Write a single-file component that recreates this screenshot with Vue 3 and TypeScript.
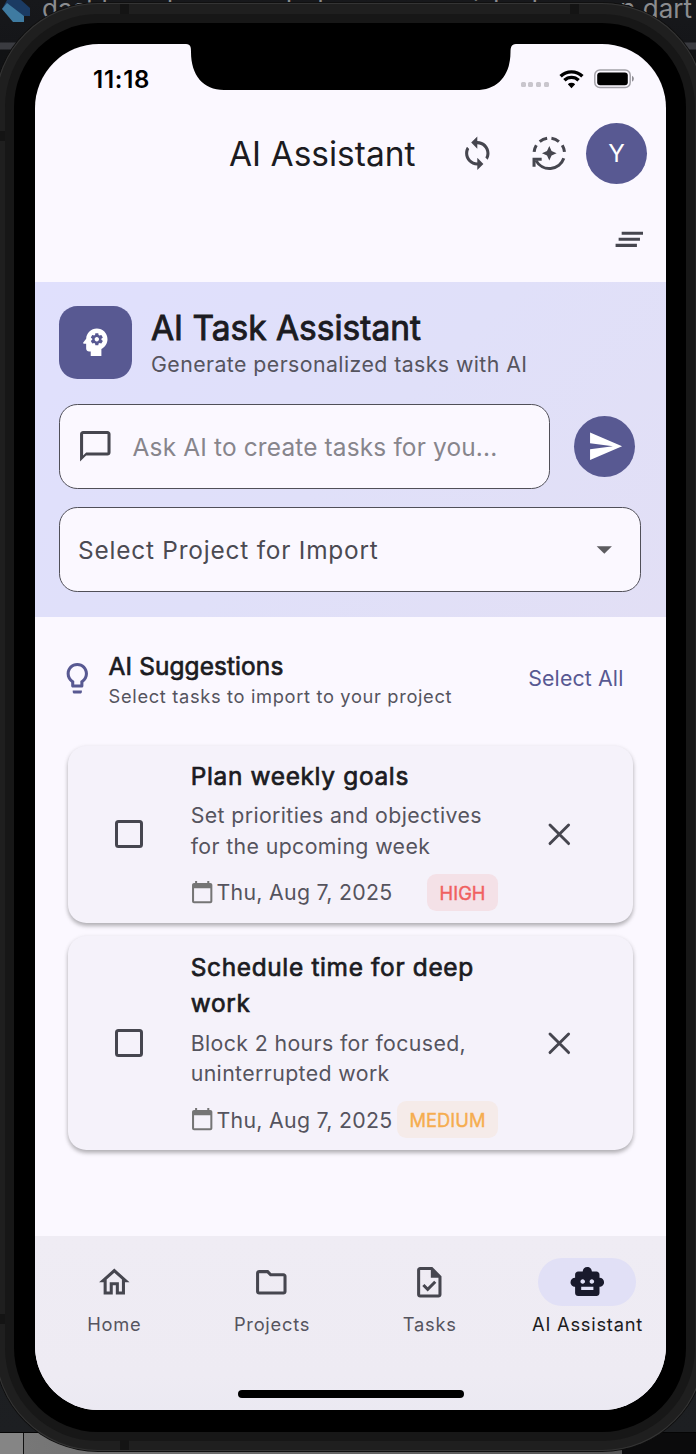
<script setup lang="ts">
interface Task {
  title: string
  description: string
  date: string
  priority: 'HIGH' | 'MEDIUM'
}

interface NavItem {
  label: string
  icon: string
  active?: boolean
}

const tasks: Task[] = [
  {
    title: 'Plan weekly goals',
    description: 'Set priorities and objectives for the upcoming week',
    date: 'Thu, Aug 7, 2025',
    priority: 'HIGH',
  },
  {
    title: 'Schedule time for deep work',
    description: 'Block 2 hours for focused, uninterrupted work',
    date: 'Thu, Aug 7, 2025',
    priority: 'MEDIUM',
  },
]

const navItems: NavItem[] = [
  { label: 'Home', icon: 'M12 5.69l5 4.5V18h-2v-6H9v6H7v-7.81l5-4.5M12 3L2 12h3v8h6v-6h2v6h6v-8h3L12 3z' },
  {
    label: 'Projects',
    icon: 'M9.17 6l2 2H20v10H4V6h5.17M10 4H4c-1.1 0-1.99.9-1.99 2L2 18c0 1.1.9 2 2 2h16c1.1 0 2-.9 2-2V8c0-1.1-.9-2-2-2h-8l-2-2z',
  },
  {
    label: 'Tasks',
    icon: 'M14 2H6c-1.1 0-2 .9-2 2v16c0 1.1.89 2 1.99 2H18c1.1 0 2-.9 2-2V8l-6-6zm4 18H6V4h7v5h5v11zM8.82 13.05L7.4 14.46 10.94 18l5.66-5.66-1.41-1.41-4.24 4.24-2.13-2.12z',
  },
  {
    label: 'AI Assistant',
    icon: 'M20 9V7c0-1.1-.9-2-2-2h-3c0-1.66-1.34-3-3-3S9 3.34 9 5H6c-1.1 0-2 .9-2 2v2c-1.66 0-3 1.34-3 3s1.34 3 3 3v4c0 1.1.9 2 2 2h12c1.1 0 2-.9 2-2v-4c1.66 0 3-1.34 3-3s-1.34-3-3-3zM7.5 11.5c0-.83.67-1.5 1.5-1.5s1.5.67 1.5 1.5S9.83 13 9 13s-1.5-.67-1.5-1.5zM16 17H8v-2h8v2zm-1-4c-.83 0-1.5-.67-1.5-1.5S14.17 10 15 10s1.5.67 1.5 1.5S15.83 13 15 13z',
    active: true,
  },
]
</script>

<template>
  <div class="desktop">
    <div class="editor-tabs">
      <svg class="dart" viewBox="0 0 30 22">
        <path d="M2 9L7 0h14l9 8v8h-6z" fill="#1b3b63" />
        <path d="M2 9l5-6 17 13v6H13z" fill="#3f7ba1" />
      </svg>
      <span class="tab-first">dashboard_screen.dart</span>
      <span class="tab-last">assistant_screen.dart</span>
    </div>
    <div class="desk-left"></div>
    <div class="desk-right"></div>

    <div class="phone">
      <i class="seam seam-tl"></i><i class="seam seam-tr"></i><i class="seam seam-bl"></i>
      <i class="seam side-tl"></i><i class="seam side-bl"></i>
      <div class="band">
        <div class="bezel">
          <div class="screen">
            <svg class="notch" width="330" height="46" viewBox="0 0 330 46">
              <path d="M0 0H330C325 0 324.500 4 324.500 8C324.500 31 312 46 290 46H38C17 46 5 31 5 8C5 4 5 0 0 0Z" />
            </svg>

            <div class="status">
              <span class="time">11:18</span>
              <span class="signal"><b></b><b></b><b></b><b></b></span>
              <svg class="wifi" width="25" height="19" viewBox="0 0 25 19">
                <path d="M1.6 6.3a15.6 15.6 0 0 1 21.8 0" />
                <path d="M5.4 10.3a10.2 10.2 0 0 1 14.2 0" />
                <path d="M12.5 18.2l-3.7-3.9a5.4 5.4 0 0 1 7.4 0z" class="dot" />
              </svg>
              <svg class="battery" width="41" height="20" viewBox="0 0 41 20">
                <rect x=".8" y="1" width="35.4" height="17.5" rx="5" fill="none" stroke="#a3a1a8" stroke-width="1.5" />
                <rect x="3.2" y="3.4" width="30.6" height="12.8" rx="3" fill="#000" />
                <path d="M38 6.8q1.9 1 1.9 3t-1.9 3z" fill="#8f8d94" />
              </svg>
            </div>

            <header class="app-bar">
              <h1>AI Assistant</h1>
              <svg class="icon bar-sync" viewBox="0 0 24 24">
                <path d="M12 4V1L8 5l4 4V6c3.31 0 6 2.69 6 6 0 1.01-.25 1.97-.7 2.8l1.46 1.46C19.54 15.03 20 13.57 20 12c0-4.42-3.58-8-8-8zm0 14c-3.31 0-6-2.69-6-6 0-1.01.25-1.97.7-2.8L5.24 7.74C4.46 8.97 4 10.43 4 12c0 4.42 3.58 8 8 8v3l4-4-4-4v3z" />
              </svg>
              <svg class="icon bar-spark" viewBox="0 0 24 24">
                <path d="M12 7.2l1.5 3.3 3.3 1.5-3.3 1.500-1.500 3.300-1.500-3.300L7.200 12l3.300-1.500z" />
                <g class="arc">
                  <path d="M2.050 11.100a10 10 0 0 1 1.450-4.400" />
                  <path d="M5.700 4.300a10 10 0 0 1 4.900-2.200" />
                  <path d="M13.400 2.100a10 10 0 0 1 4.900 2.200" />
                  <path d="M20.500 6.700a10 10 0 0 1 1.450 4.400" />
                  <path d="M21.500 15.200a10 10 0 0 1-18.200 1.600" />
                  <path d="M2 20.900v-5h5" />
                </g>
              </svg>
              <div class="avatar">Y</div>
            </header>
            <div class="sub-bar">
              <svg class="icon" viewBox="0 0 24 24"><path d="M5 13h14v-2H5v2zm-2 4h14v-2H3v2zM7 7v2h14V7H7z" /></svg>
            </div>

            <section class="panel">
              <div class="panel-head">
                <div class="badge-icon">
                  <svg class="icon" viewBox="0 0 24 24">
                    <path d="M13 8.57c-.79 0-1.43.64-1.43 1.43s.64 1.43 1.43 1.43 1.43-.64 1.43-1.43S13.79 8.57 13 8.57zM13 3C9.25 3 6.2 5.94 6.02 9.64L4.1 12.2c-.25.33-.01.8.4.8H6v3c0 1.1.9 2 2 2h1v3h7v-4.68c2.36-1.12 4-3.53 4-6.32C20 6.13 16.87 3 13 3zM16 10c0 .13-.01.26-.02.39l.83.66c.08.06.1.16.05.25l-.8 1.39c-.05.09-.16.12-.24.09l-.99-.4c-.21.16-.43.29-.67.39L14 13.83c-.01.1-.1.17-.2.17h-1.6c-.1 0-.18-.07-.2-.17l-.15-1.06c-.25-.1-.47-.23-.68-.39l-.99.4c-.09.03-.2 0-.25-.09l-.8-1.39c-.05-.08-.03-.19.05-.25l.84-.66C10.01 10.26 10 10.13 10 10c0-.13.02-.27.04-.39l-.85-.66c-.08-.06-.1-.16-.05-.26l.8-1.38c.05-.09.15-.12.24-.09l1 .4c.2-.15.43-.29.67-.39L12 6.17c.02-.1.1-.17.2-.17h1.6c.1 0 .18.07.2.17l.15 1.06c.24.1.46.23.67.39l1-.4c.09-.03.2 0 .24.09l.8 1.38c.05.09.03.2-.05.26l-.85.66c.03.12.04.25.04.39z" />
                  </svg>
                </div>
                <div class="panel-title">
                  <h2>AI Task Assistant</h2>
                  <p>Generate personalized tasks with AI</p>
                </div>
              </div>
              <div class="prompt-row">
                <div class="field prompt">
                  <svg class="icon" viewBox="0 0 24 24">
                    <path d="M20 2H4c-1.1 0-2 .9-2 2v18l4-4h14c1.1 0 2-.9 2-2V4c0-1.1-.9-2-2-2zm0 14H6l-2 2V4h16v12z" />
                  </svg>
                  <span>Ask AI to create tasks for you...</span>
                </div>
                <button class="send" aria-label="Send">
                  <svg class="icon" viewBox="0 0 24 24"><path d="M2.01 21L23 12 2.01 3 2 10l15 2-15 2z" /></svg>
                </button>
              </div>
              <div class="field select">
                <span>Select Project for Import</span>
                <svg class="icon" viewBox="0 0 24 24"><path d="M7 10l5 5 5-5z" /></svg>
              </div>
            </section>

            <section class="suggest-head">
              <svg class="icon bulb" viewBox="0 0 24 24">
                <path d="M9 21c0 .5.4 1 1 1h4c.6 0 1-.5 1-1v-1H9v1zm3-19C8.1 2 5 5.1 5 9c0 2.4 1.2 4.5 3 5.7V17c0 .5.4 1 1 1h6c.6 0 1-.5 1-1v-2.300c1.800-1.300 3-3.400 3-5.700 0-3.900-3.100-7-7-7zm2.900 11.100l-.9.6V16h-4v-2.300l-.9-.6C7.800 12.200 7 10.600 7 9c0-2.800 2.200-5 5-5s5 2.200 5 5c0 1.600-.8 3.200-2.100 4.100z" />
              </svg>
              <div class="suggest-text">
                <h3>AI Suggestions</h3>
                <p>Select tasks to import to your project</p>
              </div>
              <span class="select-all">Select All</span>
            </section>

            <main class="cards">
              <article v-for="task in tasks" :key="task.title" class="card">
                <div class="cell"><span class="checkbox"></span></div>
                <div class="body">
                  <h4>{{ task.title }}</h4>
                  <p>{{ task.description }}</p>
                  <div class="meta">
                    <svg class="cal" viewBox="0 0 24 24">
                      <path d="M20 3h-1V1h-2v2H7V1H5v2H4c-1.1 0-2 .9-2 2v16c0 1.1.9 2 2 2h16c1.1 0 2-.9 2-2V5c0-1.1-.9-2-2-2zm0 18H4V8h16v13z" />
                    </svg>
                    <span class="date">{{ task.date }}</span>
                    <span class="priority" :class="task.priority.toLowerCase()">{{ task.priority }}</span>
                  </div>
                </div>
                <div class="cell">
                  <svg class="icon" viewBox="0 0 24 24">
                    <path d="M5.900 5.900l12.200 12.200M18.100 5.900L5.900 18.100" class="cross" />
                  </svg>
                </div>
              </article>
            </main>

            <nav class="nav">
              <div v-for="item in navItems" :key="item.label" class="nav-item" :class="{ active: item.active }">
                <div class="pill"><svg class="icon" viewBox="0 0 24 24"><path :d="item.icon" /></svg></div>
                <span>{{ item.label }}</span>
              </div>
              <div class="home-bar"></div>
            </nav>
          </div>
        </div>
      </div>
    </div>
  </div>
</template>

<style>
body {
  margin: 0;
  background: #151619;
}
</style>

<style scoped>
* {
  box-sizing: border-box;
}
h1, h2, h3, h4, p {
  margin: 0;
  font-weight: 400;
}
.desktop {
  position: relative;
  width: 696px;
  height: 1454px;
  overflow: hidden;
  background: linear-gradient(#17181b 0, #151619 42px, #3a3b40 43px, #3a3b40 49px, #111214 50px, #1d1f22 1432px);
  font-family: Inter, "Liberation Sans", sans-serif;
  color: #1b1b21;
}
.editor-tabs {
  position: absolute;
  inset: 0 0 auto 0;
  height: 22px;
  color: #8b8c8f;
  font-size: 26px;
  line-height: 18px;
  white-space: nowrap;
}
.dart {
  position: absolute;
  left: 0;
  top: 0;
  width: 30px;
  height: 22px;
}
.tab-first {
  position: absolute;
  left: 42px;
  top: 0;
}
.tab-last {
  position: absolute;
  right: 4px;
  top: 0;
}
.desk-left,
.desk-right {
  position: absolute;
  bottom: 0;
  height: 22px;
  border-top: 1px solid #050505;
}
.desk-left {
  left: 0;
  width: 622px;
  background: linear-gradient(90deg, #858585 0, #858585 23px, #111 23px, #111 24px, #777 24px, #555 100%);
}
.desk-right {
  left: 622px;
  right: 0;
  background: #0b0b0c;
}

/* Device shell: outer rim, inner band, black bezel */
.phone {
  position: absolute;
  left: -5px;
  top: 3px;
  width: 710px;
  height: 1448px;
  padding: 11px 10px 10px;
  border-radius: 103px;
  background: #1f1f1f;
  box-shadow: inset 0 0 0 1px #343434, 0 0 0 1px #101010;
}
.band {
  height: 100%;
  padding: 9px;
  border-radius: 93px;
  background: #171717;
}
.bezel {
  height: 100%;
  padding: 21px 20px 21px 21px;
  border-radius: 84px;
  background: #000;
}
.seam {
  position: absolute;
  width: 9px;
  height: 10px;
  background: #141414;
}
.seam-tl { left: 125px; top: 1px; }
.seam-tr { left: 575px; top: 1px; }
.seam-bl { left: 125px; bottom: 1px; }
.side-tl { left: 5px; top: 128px; width: 5px; }
.side-bl { left: 5px; bottom: 127px; width: 5px; }

.screen {
  position: relative;
  display: flex;
  flex-direction: column;
  width: 631px;
  height: 1366px;
  overflow: hidden;
  border-radius: 64px;
  background: #fbf8ff;
}
.notch {
  position: absolute;
  left: 151px;
  top: 0;
}
.icon {
  display: block;
  flex: none;
  width: 36.6px;
  height: 36.6px;
  fill: #46464f;
}

.status {
  display: flex;
  align-items: center;
  height: 70px;
  padding: 0 31.5px 0 58px;
}
.time {
  margin-right: auto;
  color: #000;
  font-size: 24px;
  font-weight: 600;
  letter-spacing: 0.75px;
}
.signal {
  display: flex;
  gap: 2.6px;
  margin: 11px 10px 0 0;
}
.signal b {
  width: 5px;
  height: 5px;
  border-radius: 1.5px;
  background: #c9c6cd;
}
.wifi {
  margin: 0 10px 0 0;
  fill: none;
  stroke: #000;
  stroke-width: 3.4;
}
.wifi .dot {
  fill: #000;
  stroke: none;
}

.app-bar {
  display: flex;
  align-items: center;
  height: 79px;
  padding-left: 194px;
}
h1 {
  width: 229.5px;
  padding-top: 1px;
  font-size: 33.5px;
  white-space: nowrap;
}
.bar-spark {
  margin-left: 36.4px;
}
.arc {
  fill: none;
  stroke: #46464f;
  stroke-width: 2;
}
.avatar {
  width: 61px;
  height: 61px;
  margin-left: 18px;
  border-radius: 50%;
  background: #585992;
  color: #fff;
  font-size: 24.4px;
  line-height: 61px;
  text-align: center;
}
.sub-bar {
  display: flex;
  justify-content: flex-end;
  align-items: center;
  height: 88.5px;
  padding: 4px 18px 0 0;
}

.panel {
  flex: none;
  height: 335.5px;
  padding: 24.5px 24px;
  background: linear-gradient(135deg, #e0e0fd, #e0e0f9 50%, #e2dff5);
}
.panel-head {
  display: flex;
  gap: 19px;
  height: 73px;
}
.badge-icon {
  display: grid;
  place-items: center;
  width: 73px;
  height: 73px;
  border-radius: 18.3px;
  background: #585992;
}
.badge-icon .icon,
.send .icon {
  fill: #fff;
}
h2 {
  font-size: 33.5px;
  line-height: 44px;
  white-space: nowrap;
  -webkit-text-stroke: 0.9px currentColor;
}
.panel-head p {
  font-size: 21.3px;
  line-height: 29px;
  letter-spacing: 0.43px;
  color: #55545e;
  white-space: nowrap;
}
.prompt-row {
  display: flex;
  align-items: center;
  gap: 24.4px;
  margin: 24.5px 0 18.5px;
}
.field {
  display: flex;
  align-items: center;
  height: 85px;
  border: 1.5px solid #504f58;
  border-radius: 18.3px;
  background: #fbf8ff;
  font-size: 24.4px;
  letter-spacing: 0.8px;
  white-space: nowrap;
}
.field span {
  padding-top: 1px;
}
.prompt {
  width: 491px;
  padding-left: 17px;
  gap: 19px;
  color: #87858c;
  letter-spacing: 0.17px;
}
.select {
  justify-content: space-between;
  width: 582px;
  padding: 0 17px 0 18px;
  color: #4b4a52;
}
.select .icon {
  fill: #5d5c60;
}
.send {
  display: grid;
  place-items: center;
  width: 61px;
  height: 61px;
  padding: 0;
  border: 0;
  border-radius: 50%;
  background: #585992;
}

.suggest-head {
  display: flex;
  flex: none;
  align-items: center;
  height: 128.5px;
  padding: 0 42.5px 5px 24px;
}
.bulb {
  fill: #585992;
}
.suggest-text {
  margin: 2px 0 0 13px;
}
h3 {
  font-size: 24.4px;
  line-height: 33px;
  letter-spacing: 0.12px;
  white-space: nowrap;
  -webkit-text-stroke: 0.7px currentColor;
}
.suggest-text p {
  font-size: 18.3px;
  line-height: 26px;
  letter-spacing: 0.66px;
  color: #55545e;
  white-space: nowrap;
}
.select-all {
  margin: -1px 0 0 auto;
  font-size: 21.3px;
  letter-spacing: 0.15px;
  color: #585992;
  white-space: nowrap;
}

.cards {
  display: flex;
  flex: 1;
  flex-direction: column;
  gap: 13.5px;
  padding: 0 33px;
}
.card {
  display: grid;
  grid-template-columns: 122.7px 307px 123px;
  padding: 12.4px 0 12.2px;
  border-radius: 18.3px;
  background: #f5f2fa;
  box-shadow: 0 3px 4px rgb(0 0 0 / 26%), 0 1px 5px rgb(0 0 0 / 8%);
}
.cell {
  display: grid;
  place-items: center;
}
.checkbox {
  width: 28px;
  height: 28px;
  border: 3px solid #46464f;
  border-radius: 3.5px;
}
.cross {
  fill: none;
  stroke: #46464f;
  stroke-width: 1.9;
  stroke-linecap: round;
}
h4 {
  font-size: 24.4px;
  line-height: 36.5px;
  letter-spacing: 0.68px;
  -webkit-text-stroke: 0.7px currentColor;
}
.body p {
  margin: 6.1px 0 12.2px;
  font-size: 21.3px;
  line-height: 30.5px;
  letter-spacing: 0.38px;
  color: #55545e;
}
.meta {
  display: flex;
  align-items: center;
  height: 37px;
  white-space: nowrap;
}
.cal {
  flex: none;
  width: 24.4px;
  height: 24.4px;
  margin-left: -0.6px;
  fill: #757575;
}
.date {
  margin-left: 2px;
  font-size: 21.3px;
  letter-spacing: 0.3px;
  color: #55545e;
}
.priority {
  margin-left: auto;
  padding: 1px 12.2px 0;
  border-radius: 9.2px;
  font-size: 18.3px;
  line-height: 36px;
  letter-spacing: 0.05px;
  -webkit-text-stroke: 0.4px currentColor;
}
.high {
  background: #f4e1e7;
  color: #f0605f;
}
.medium {
  background: #f5ebe9;
  color: #f5ad4f;
}

.nav {
  position: relative;
  display: flex;
  flex: none;
  height: 174px;
  padding-top: 21.5px;
  background: linear-gradient(#efecf4, #eeebf3 80%, #ebe9f2);
}
.nav-item {
  display: flex;
  flex: 1;
  flex-direction: column;
  align-items: center;
  font-size: 18.3px;
  line-height: 26px;
  letter-spacing: 0.76px;
  color: #55545e;
  white-space: nowrap;
}
.nav-item span {
  padding-left: 0.8px;
}
.pill {
  display: grid;
  place-items: center;
  width: 97.5px;
  height: 48.7px;
  margin-bottom: 4.5px;
  border-radius: 25px;
}
.active {
  color: #1b1b21;
}
.active .pill {
  background: #e1e0f6;
}
.active .icon {
  fill: #191a2c;
}
.home-bar {
  position: absolute;
  left: 202.5px;
  bottom: 12px;
  width: 226px;
  height: 8px;
  border-radius: 4px;
  background: #000;
}
</style>
